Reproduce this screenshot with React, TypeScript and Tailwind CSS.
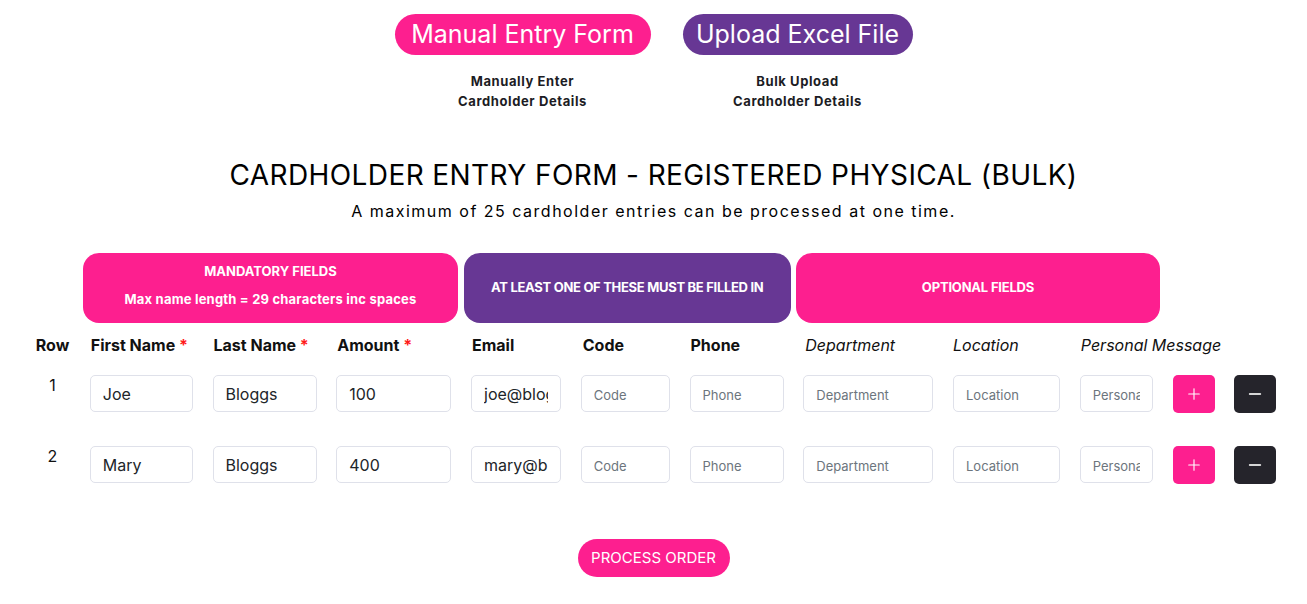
import { Plus, Minus } from "lucide-react";

const cols =
  "grid grid-cols-[35px_103px_104px_115px_90px_89px_94px_130px_107px_73px_42px_42px] gap-x-[19.75px]";

const rows = [
  { n: 1, first: "Joe", last: "Bloggs", amount: "100", email: "joe@bloggs.com" },
  { n: 2, first: "Mary", last: "Bloggs", amount: "400", email: "mary@bloggs.com" },
];

function Field({ value, placeholder }: { value?: string; placeholder?: string }) {
  return (
    <input
      defaultValue={value}
      placeholder={placeholder}
      className="h-[37px] w-full rounded-[5px] border border-[#dfe1ea] bg-white px-3 text-[16px] text-[#212529] outline-none placeholder:text-[13px] placeholder:text-[#6c757d]"
    />
  );
}

export default function App() {
  return (
    <div className="min-h-screen bg-white font-['Inter',sans-serif] text-[#111]">
      {/* Choice buttons */}
      <div className="flex justify-center gap-8 pt-[14px]">
        <div className="flex flex-col items-center">
          <button className="h-[41px] w-[256px] rounded-full bg-[#fd1f8f] text-[25px] text-white">
            Manual Entry Form
          </button>
          <p className="mt-4 text-center text-[13px] font-bold leading-5 tracking-[0.6px] text-[#1c1c24]">
            Manually Enter
            <br />
            Cardholder Details
          </p>
        </div>
        <div className="flex flex-col items-center">
          <button className="h-[41px] w-[230px] rounded-full bg-[#673794] text-[25px] text-white">
            Upload Excel File
          </button>
          <p className="mt-4 text-center text-[13px] font-bold leading-5 tracking-[0.6px] text-[#1c1c24]">
            Bulk Upload
            <br />
            Cardholder Details
          </p>
        </div>
      </div>

      {/* Title */}
      <h1 className="mt-[46px] text-center text-[28px] leading-9 tracking-[0.4px] text-black">
        CARDHOLDER ENTRY FORM - REGISTERED PHYSICAL (BULK)
      </h1>
      <p className="mt-[6px] text-center text-[16px] leading-6 tracking-[1.5px] text-black">
        A maximum of 25 cardholder entries can be processed at one time.
      </p>

      {/* Table */}
      <div className="mt-[30px] pl-[35px]">
        <div className={cols}>
          <div />
          <div className="col-span-3 mx-[-7px] flex h-[70px] flex-col items-center gap-[10px] rounded-2xl bg-[#fd1f8f] pt-[9px] text-[13px] font-bold leading-[18px] text-white">
            <span>MANDATORY FIELDS</span>
            <span className="tracking-[0.2px]">Max name length = 29 characters inc spaces</span>
          </div>
          <div className="col-span-3 mx-[-7px] flex h-[70px] items-center justify-center rounded-2xl bg-[#673794] text-[13px] font-bold tracking-[-0.3px] text-white">
            AT LEAST ONE OF THESE MUST BE FILLED IN
          </div>
          <div className="col-span-3 mx-[-7px] flex h-[70px] items-center justify-center rounded-2xl bg-[#fd1f8f] text-[13px] font-bold tracking-[-0.2px] text-white">
            OPTIONAL FIELDS
          </div>
        </div>

        <div className={`${cols} mt-[10px] whitespace-nowrap text-[16px] leading-6`}>
          <div className="text-center font-bold">Row</div>
          <div className="pl-px font-bold">
            First Name <span className="text-[#ff1a1a]">*</span>
          </div>
          <div className="pl-px font-bold">
            Last Name <span className="text-[#ff1a1a]">*</span>
          </div>
          <div className="pl-px font-bold">
            Amount <span className="text-[#ff1a1a]">*</span>
          </div>
          <div className="pl-px font-bold">Email</div>
          <div className="pl-[2px] font-bold">Code</div>
          <div className="pl-px font-bold">Phone</div>
          <div className="pl-[2px] italic">Department</div>
          <div className="italic">Location</div>
          <div className="pl-px italic">Personal Message</div>
        </div>

        {rows.map((r, i) => (
          <div key={r.n} className={`${cols} ${i === 0 ? "mt-[18px]" : "mt-[33px]"} items-start`}>
            <div className="mt-[-2px] text-center text-[16px] leading-6">{r.n}</div>
            <Field value={r.first} />
            <Field value={r.last} />
            <Field value={r.amount} />
            <Field value={r.email} />
            <Field placeholder="Code" />
            <Field placeholder="Phone" />
            <Field placeholder="Department" />
            <Field placeholder="Location" />
            <Field placeholder="Personal Message" />
            <button className="flex h-[38px] w-[42px] items-center justify-center rounded-[5px] bg-[#fd1f8f] text-white">
              <Plus size={18} strokeWidth={1.5} />
            </button>
            <button className="flex h-[38px] w-[42px] items-center justify-center rounded-[5px] bg-[#25242b] text-[#d6d6d6]">
              <Minus size={18} strokeWidth={2.5} />
            </button>
          </div>
        ))}
      </div>

      <div className="mt-[55px] flex justify-center">
        <button className="h-[38px] w-[152px] rounded-full bg-[#fd1f8f] text-[15px] text-white">
          PROCESS ORDER
        </button>
      </div>
    </div>
  );
}
